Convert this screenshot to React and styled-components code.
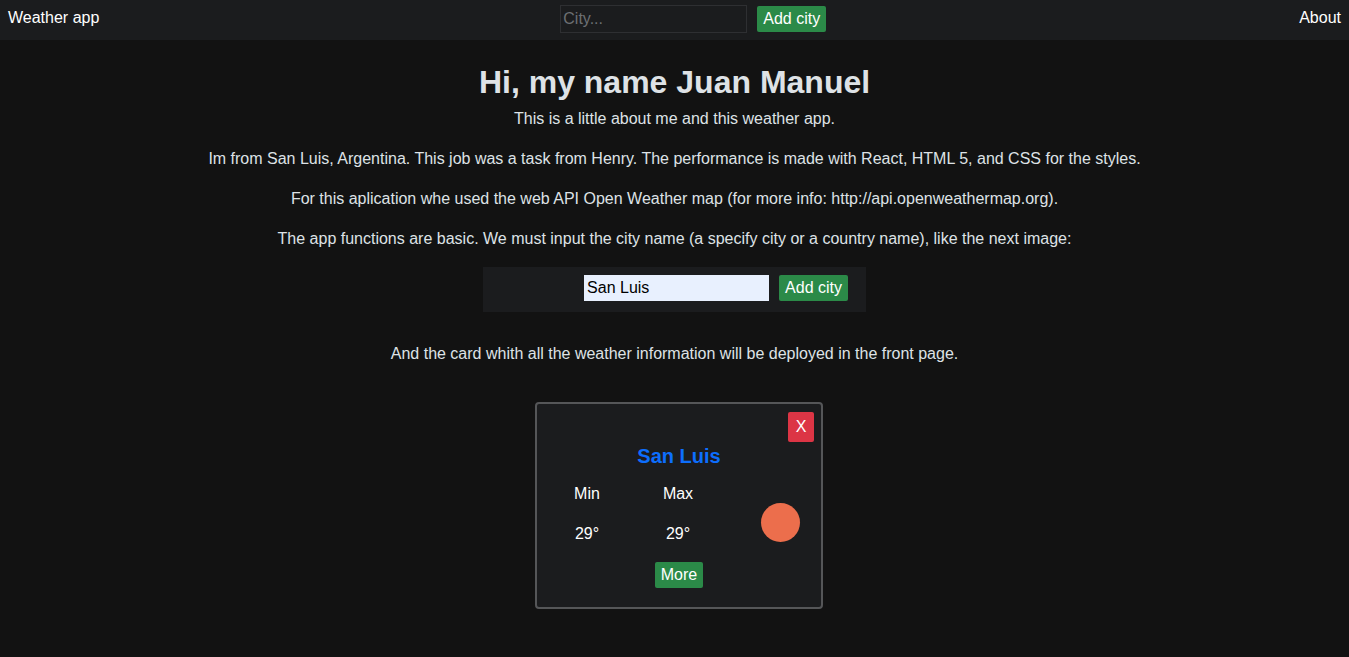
import styled, { createGlobalStyle } from "styled-components";

const GlobalStyle = createGlobalStyle`
  * {
    box-sizing: border-box;
  }

  body {
    margin: 0;
    background-color: #121212;
    color: #dee2e6;
    font-family: "Liberation Sans", Arial, sans-serif;
    font-size: 16px;
  }
`;

const Page = styled.div`
  width: 100%;
  min-height: 100vh;
  background-color: #121212;
`;

const Navbar = styled.nav`
  height: 40px;
  padding: 6px 8px 0 8px;
  display: flex;
  align-items: flex-start;
  justify-content: space-between;
  background-color: #1b1c1e;
`;

const Brand = styled.span`
  line-height: 24px;
  color: #ffffff;
`;

const NavLink = styled.span`
  line-height: 24px;
  color: #ffffff;
`;

const SearchForm = styled.form`
  display: flex;
  align-items: flex-start;
  gap: 10px;
  margin: -1px 0 0 -12px;
`;

const CityInput = styled.input`
  width: ${({ w }) => w}px;
  height: ${({ h }) => h}px;
  padding: 0 2px;
  font-family: inherit;
  font-size: 16px;
  color: ${({ filled }) => (filled ? "#000000" : "#dee2e6")};
  background-color: ${({ filled }) => (filled ? "#e8f0fe" : "#1b1c1e")};
  border: 1px solid ${({ filled }) => (filled ? "#e8f0fe" : "#2e2f32")};
  border-radius: 0;
  outline: none;

  &::placeholder {
    color: #6c6f73;
  }
`;

const Button = styled.button`
  height: 26px;
  padding: 0 ${({ px }) => px ?? 6}px;
  font-family: inherit;
  font-size: 16px;
  line-height: 26px;
  color: #ffffff;
  background-color: ${({ variant }) =>
    variant === "danger" ? "#dc3545" : "#2b8a48"};
  border: none;
  border-radius: 2px;
  cursor: pointer;
`;

const NavButton = styled(Button)`
  margin-top: 1px;
`;

const Main = styled.main`
  display: flex;
  flex-direction: column;
  align-items: center;
  text-align: center;
`;

const Title = styled.h1`
  margin: 21px 0 4px 0;
  font-size: 32px;
  line-height: 42px;
  font-weight: 700;
  color: #dee2e6;
`;

const Paragraph = styled.p`
  margin: 0 0 ${({ mb }) => mb ?? 16}px 0;
  line-height: 24px;
  color: #dee2e6;
`;

const Snapshot = styled.div`
  width: 383px;
  height: 45px;
  margin-bottom: 30px;
  padding: 8px 18px 0 0;
  display: flex;
  justify-content: flex-end;
  align-items: flex-start;
  gap: 10px;
  background-color: #1b1c1e;
`;

const Card = styled.div`
  position: relative;
  width: 288px;
  height: 207px;
  margin-left: 9px;
  padding-top: 40px;
  display: flex;
  flex-direction: column;
  align-items: center;
  background-color: #1b1c1e;
  border: 2px solid #555658;
  border-radius: 4px;
`;

const CloseButton = styled(Button)`
  position: absolute;
  top: 8px;
  right: 7px;
  width: 26px;
  height: 30px;
  padding: 0;
  line-height: 30px;
`;

const CityName = styled.h2`
  margin: 0;
  font-size: 20px;
  line-height: 24px;
  font-weight: 700;
  color: #0d6efd;
`;

const Stats = styled.div`
  width: 100%;
  margin-top: 14px;
  display: grid;
  grid-template-columns: 100px 82px 1fr;
  grid-template-rows: 24px 24px;
  row-gap: 16px;
  align-items: center;
`;

const Cell = styled.span`
  text-align: center;
  line-height: 24px;
  color: #ffffff;
`;

const Sun = styled.div`
  grid-column: 3;
  grid-row: 1 / span 2;
  width: 39px;
  height: 39px;
  margin: 17px 0 0 42px;
  border-radius: 50%;
  background-color: #ec6e4c;
`;

const MoreButton = styled(Button)`
  margin-top: 16px;
`;

export default function App() {
  return (
    <Page>
      <GlobalStyle />
      <Navbar>
        <Brand>Weather app</Brand>
        <SearchForm onSubmit={(e) => e.preventDefault()}>
          <CityInput w={187} h={28} placeholder="City..." />
          <NavButton type="submit">Add city</NavButton>
        </SearchForm>
        <NavLink>About</NavLink>
      </Navbar>

      <Main>
        <Title>Hi, my name Juan Manuel</Title>
        <Paragraph>This is a little about me and this weather app.</Paragraph>
        <Paragraph>
          Im from San Luis, Argentina. This job was a task from Henry. The
          performance is made with React, HTML 5, and CSS for the styles.
        </Paragraph>
        <Paragraph>
          For this aplication whe used the web API Open Weather map (for more
          info: http://api.openweathermap.org).
        </Paragraph>
        <Paragraph>
          The app functions are basic. We must input the city name (a specify
          city or a country name), like the next image:
        </Paragraph>

        <Snapshot>
          <CityInput w={185} h={26} filled defaultValue="San Luis" readOnly />
          <Button>Add city</Button>
        </Snapshot>

        <Paragraph mb={36}>
          And the card whith all the weather information will be deployed in
          the front page.
        </Paragraph>

        <Card>
          <CloseButton variant="danger">X</CloseButton>
          <CityName>San Luis</CityName>
          <Stats>
            <Cell>Min</Cell>
            <Cell>Max</Cell>
            <Sun />
            <Cell>29°</Cell>
            <Cell>29°</Cell>
          </Stats>
          <MoreButton>More</MoreButton>
        </Card>
      </Main>
    </Page>
  );
}
